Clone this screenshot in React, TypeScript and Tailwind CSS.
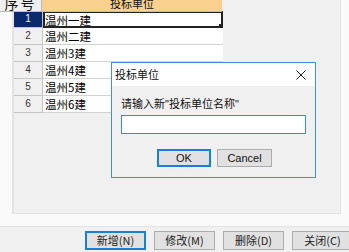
import React from 'react';

const rows = ['温州一建', '温州二建', '温州3建', '温州4建', '温州5建', '温州6建'];

const cjk = "font-['Noto_Sans_CJK_SC',sans-serif]";

const Btn: React.FC<{ label: string; focused?: boolean }> = ({ label, focused }) => (
  <button
    className={`w-[61px] h-[19px] shrink-0 bg-[#e1e1e1] text-[11px] leading-none text-[#222] ${cjk} ${
      focused ? 'border-2 border-[#1a7fd6]' : 'border border-[#adadad]'
    }`}
  >
    {label}
  </button>
);

const App: React.FC = () => {
  return (
    <div className="relative w-[349px] h-[252px] overflow-hidden bg-[#f0f0f0] font-['Liberation_Sans',sans-serif]">
      {/* header row sits above the frame, scrolled partly out of view */}
      <div className="absolute left-0 top-[-5px] flex h-[17px] w-[222px] z-10">
        <div className={`w-[42px] bg-[#efefef] border-r border-b border-[#bdbdbd] text-[14px] leading-[17px] tracking-[2px] text-center text-[#111] ${cjk}`}>
          序号
        </div>
        <div className={`flex-1 bg-[#f9d08e] border-b border-[#bdbdbd] text-[11px] leading-[17px] text-center text-[#111] ${cjk}`}>
          投标单位
        </div>
      </div>

      {/* frame around the grid */}
      <div className="h-[227px] bg-[#fafafa] border-b border-[#e2e2e2] pl-[12px] pr-[8px] pb-[12px]">
        <div className="h-full bg-[#f0f0f0] border-l-2 border-[#7a7a7a] border-r border-b border-[#e4e4e4] overflow-hidden">
          <div className="w-[209px] pt-[11px]">
            {rows.map((name, i) => (
              <div key={name} className="flex h-[17px] overflow-hidden">
                <div
                  className={`w-[29px] border-r border-b border-[#c6c6c6] text-[10px] leading-[16px] text-center ${
                    i === 0 ? 'bg-[#0b2a6b] text-white' : 'bg-[#f0f0f0] text-[#333]'
                  }`}
                >
                  {i + 1}
                </div>
                {i === 0 ? (
                  <div className={`relative flex-1 bg-white border-2 border-[#222] text-[11.5px] leading-[14px] text-black ${cjk}`}>
                    {name}
                    <span className="absolute right-[-2px] bottom-[-2px] w-[4px] h-[4px] bg-[#222]" />
                  </div>
                ) : (
                  <div className={`flex-1 bg-white border-b border-[#d2d2d2] pl-[2px] text-[11.5px] leading-[17px] text-black ${cjk}`}>
                    {name}
                  </div>
                )}
              </div>
            ))}
          </div>
        </div>
      </div>

      {/* bottom buttons */}
      <div className="flex gap-[8px] pl-[85px] pt-[4px]">
        <Btn label="新增(N)" focused />
        <Btn label="修改(M)" />
        <Btn label="删除(D)" />
        <Btn label="关闭(C)" />
      </div>

      {/* dialog */}
      <div className="absolute z-20 left-[111px] top-[62px] w-[205px] h-[116px] border border-[#3c93dc] bg-[#f0f0f0] flex flex-col">
        <div className="h-[23px] bg-white flex items-center justify-between pl-[3px] pr-[9px]">
          <span className={`text-[11px] text-[#111] ${cjk}`}>投标单位</span>
          <svg width="10" height="10" viewBox="0 0 10 10" className="text-[#222]">
            <path d="M0.5 0.5 L9.5 9.5 M9.5 0.5 L0.5 9.5" stroke="currentColor" strokeWidth="1" fill="none" />
          </svg>
        </div>
        <div className="flex flex-col pl-[9px] pt-[9px]">
          <span className={`text-[11px] leading-[16px] text-[#111] ${cjk}`}>
            请输入新<span className="font-['Liberation_Sans',sans-serif]">"</span>投标单位名称<span className="font-['Liberation_Sans',sans-serif]">"</span>
          </span>
          <div className="mt-[3px] w-[185px] h-[19px] bg-white border border-[#3c8ad0]" />
          <div className="flex gap-[6px] pl-[36px] mt-[15px]">
            <button className="w-[54px] h-[18px] bg-[#e1e1e1] border-2 border-[#1a7fd6] text-[11px] leading-none text-[#111]">
              OK
            </button>
            <button className="w-[55px] h-[18px] bg-[#e1e1e1] border border-[#adadad] text-[11px] leading-none text-[#111]">
              Cancel
            </button>
          </div>
        </div>
      </div>
    </div>
  );
};

export default App;
